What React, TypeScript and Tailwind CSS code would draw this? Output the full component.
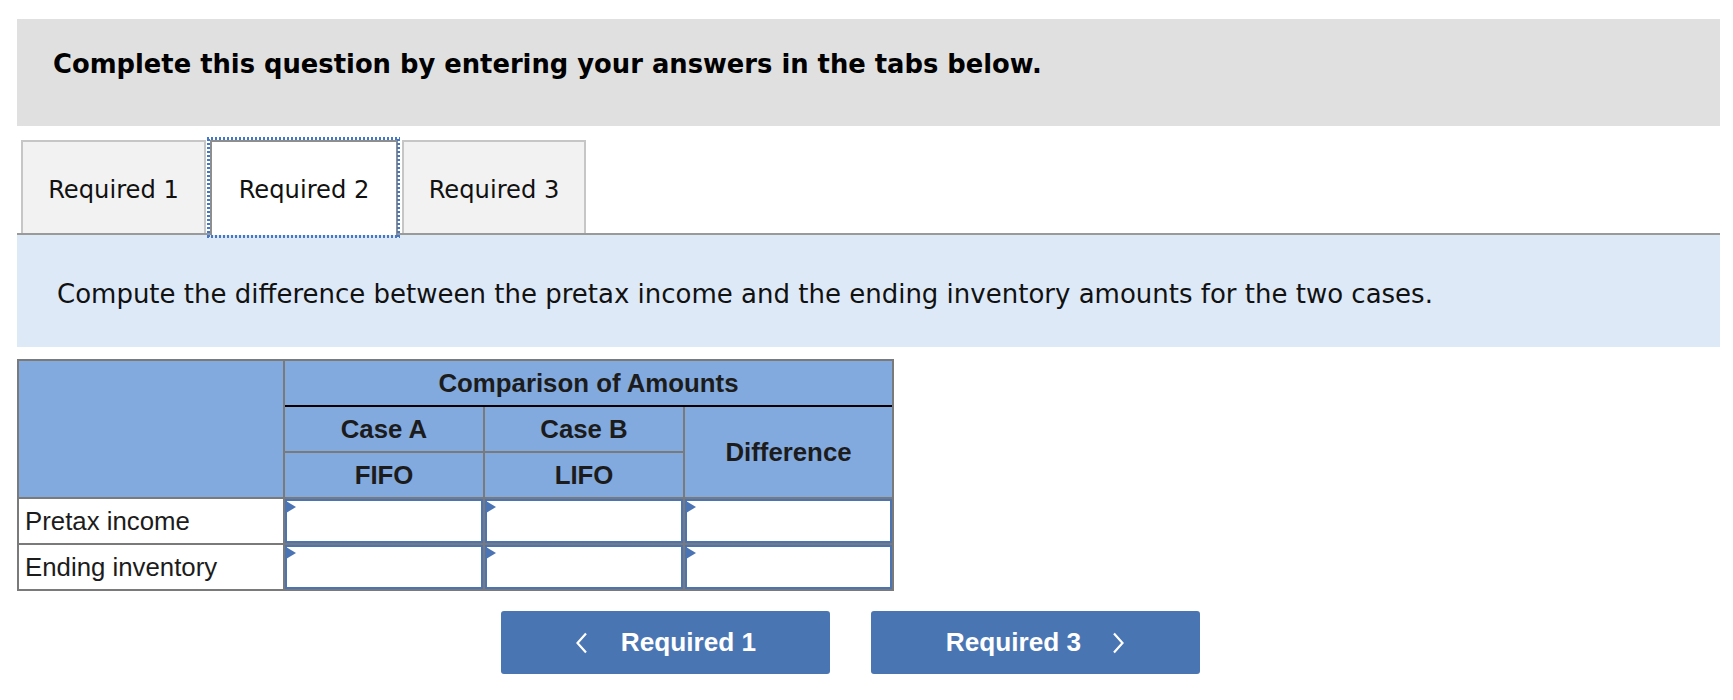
import React from "react";

const HDR = "bg-[#82aade] flex items-center justify-center font-bold text-[#1c1c1c] text-[25.8px]";

function InputCell() {
  return (
    <div className="relative bg-white border-2 border-[#4a74b4]">
      <div className="absolute -left-[1px] top-[0px] w-0 h-0 border-y-[6.5px] border-y-transparent border-l-[10px] border-l-[#4a74b4]" />
    </div>
  );
}

function Chevron({ dir }: { dir: "left" | "right" }) {
  return (
    <svg width="13" height="22" viewBox="0 0 13 22" fill="none" className="shrink-0">
      {dir === "left" ? (
        <path d="M11 1.5 L2.5 11 L11 20.5" stroke="white" strokeWidth="2.2" />
      ) : (
        <path d="M2 1.5 L10.5 11 L2 20.5" stroke="white" strokeWidth="2.2" />
      )}
    </svg>
  );
}

export default function App() {
  return (
    <div className="w-[1733px] h-[700px] bg-white pl-[17px] pr-[13px] pt-[19px]">
      <div className="bg-[#e0e0e0] h-[107px] pl-[36px] pt-[30px]">
        <p className="font-['DejaVu_Sans',Verdana,sans-serif] font-bold text-[25.8px] leading-[30px] text-black">
          Complete this question by entering your answers in the tabs below.
        </p>
      </div>

      <div className="mt-[14px] flex items-start h-[95px] border-b-2 border-[#9a9a9a] pl-[4px] gap-[4px] font-['DejaVu_Sans',Verdana,sans-serif] text-[24.2px] text-[#111]">
        <div className="w-[185px] h-[93px] pt-[5px] bg-[#f2f2f2] border-2 border-b-0 border-[#c6c6c6] flex items-center justify-center">
          Required 1
        </div>
        <div className="w-[188px] h-[95px] pt-[3px] bg-white border-2 border-b-0 border-[#8e8e8e] flex items-center justify-center relative z-10">
          Required 2
          <span className="pointer-events-none absolute -left-[5px] -top-[5px] -right-[4px] -bottom-[3px] [background-image:linear-gradient(90deg,#4676c6_2px,transparent_2px),linear-gradient(90deg,#4676c6_2px,transparent_2px),linear-gradient(0deg,#4676c6_2px,transparent_2px),linear-gradient(0deg,#4676c6_2px,transparent_2px)] [background-size:4px_3px,4px_3px,3px_4px,3px_4px] [background-position:0_0,0_100%,0_0,100%_0] [background-repeat:repeat-x,repeat-x,repeat-y,repeat-y]" />
        </div>
        <div className="w-[184px] h-[93px] pt-[5px] bg-[#f2f2f2] border-2 border-b-0 border-[#c6c6c6] flex items-center justify-center">
          Required 3
        </div>
      </div>

      <div className="bg-[#dde9f7] h-[112px] pl-[40px] pt-[44px]">
        <p className="font-['DejaVu_Sans',Verdana,sans-serif] text-[26px] leading-[30px] text-[#111]">
          Compute the difference between the pretax income and the ending inventory amounts for the two cases.
        </p>
      </div>

      <div className="mt-[12px] w-[877px] bg-[#7a7a7a] p-[2px] grid grid-cols-[264px_198px_198px_207px] grid-rows-[44px_44px_44px_44px_44px] gap-[2px] font-['Liberation_Sans',Arial,sans-serif]">
        <div className="bg-[#82aade] row-span-3" />
        <div className={`${HDR} col-span-3 shadow-[0_2px_0_0_#000]`}>Comparison of Amounts</div>
        <div className={HDR}>Case A</div>
        <div className={HDR}>Case B</div>
        <div className={`${HDR} row-span-2`}>Difference</div>
        <div className={HDR}>FIFO</div>
        <div className={HDR}>LIFO</div>

        <div className="bg-white flex items-center pl-[6px] text-[25.8px] text-[#1c1c1c]">Pretax income</div>
        <InputCell />
        <InputCell />
        <InputCell />

        <div className="bg-white flex items-center pl-[6px] text-[25.8px] text-[#1c1c1c]">Ending inventory</div>
        <InputCell />
        <InputCell />
        <InputCell />
      </div>

      <div className="mt-[20px] flex gap-[41px] pl-[484px] font-['Liberation_Sans',Arial,sans-serif]">
        <button className="w-[329px] h-[63px] rounded-[3px] bg-[#4a75b3] flex items-center justify-center gap-[33px] text-white font-bold text-[26.2px]">
          <Chevron dir="left" />
          <span>Required 1</span>
        </button>
        <button className="w-[329px] h-[63px] rounded-[3px] bg-[#4a75b3] flex items-center justify-center gap-[31px] text-white font-bold text-[26.2px]">
          <span>Required 3</span>
          <Chevron dir="right" />
        </button>
      </div>
    </div>
  );
}
